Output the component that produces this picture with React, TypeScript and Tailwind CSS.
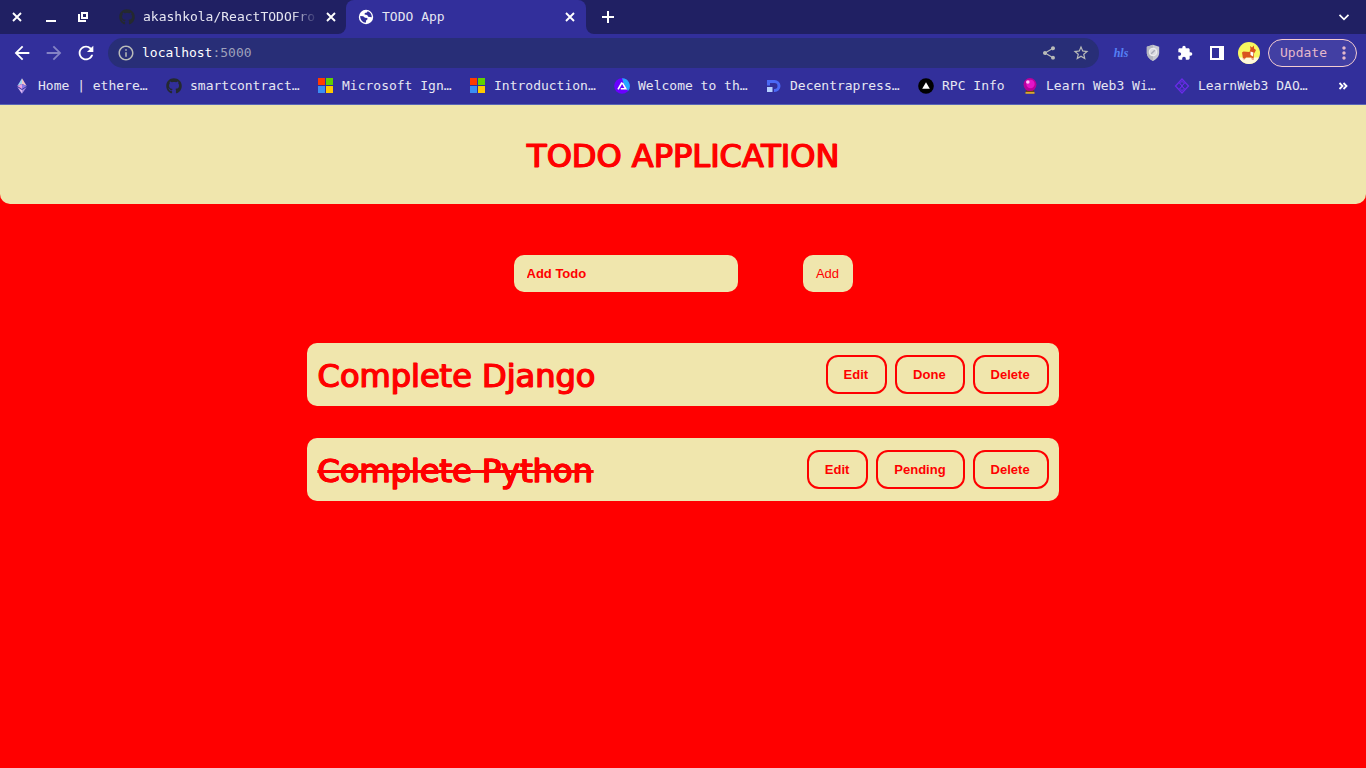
import React, { useState } from 'react';
import {
  MdArrowBack,
  MdArrowForward,
  MdRefresh,
  MdInfoOutline,
  MdShare,
  MdStarBorder,
  MdExtension,
  MdMoreVert,
} from 'react-icons/md';
import { FaGithub } from 'react-icons/fa';

type IconProps = { className?: string };

function CloseIcon({ className }: IconProps) {
  return (
    <svg viewBox="0 0 10 10" className={className} fill="none" stroke="currentColor" strokeWidth="1.900" aria-hidden="true">
      <path d="M1 1l8 8M9 1l-8 8" />
    </svg>
  );
}

function GlobeIcon() {
  return (
    <svg viewBox="0 0 16 16" className="size-4 shrink-0" aria-hidden="true">
      <circle cx="8" cy="8" r="7.2" fill="#fff" />
      <path
        d="M2.200 7l3 .2 1.800 1.500 2.400.3v1.400l-1.200.8-.4 2.600C4.600 13.600 2.200 11 2.200 7zM9.600 2.200L9 3.600 6.800 4 6.600 5.400l2.600.6 1 1.800 3.600.4C13.800 5 12 2.800 9.600 2.200z"
        fill="#322f9b"
      />
    </svg>
  );
}

function EthereumIcon() {
  return (
    <svg viewBox="0 0 16 16" className="size-4 shrink-0" aria-hidden="true">
      <path d="M8 .3L3.300 8 8 6z" fill="#9fd4f2" />
      <path d="M8 .3L12.700 8 8 6z" fill="#f2c3c9" />
      <path d="M3.300 8L8 6v4.900z" fill="#e9a0e0" />
      <path d="M12.700 8L8 6v4.900z" fill="#8a7be8" />
      <path d="M3.300 9L8 11.900v3.900z" fill="#d9b6f2" />
      <path d="M12.700 9L8 11.900v3.900z" fill="#a58ce0" />
    </svg>
  );
}

function MicrosoftIcon() {
  return (
    <svg viewBox="0 0 16 16" className="size-4 shrink-0" aria-hidden="true">
      <path d="M0 0h7v7H0z" fill="#ff3a00" />
      <path d="M8 0h7v7H8z" fill="#60d000" />
      <path d="M0 8h7v7H0z" fill="#3a8df5" />
      <path d="M8 8h7v7H8z" fill="#ffc800" />
    </svg>
  );
}

function AlchemyIcon() {
  return (
    <svg viewBox="0 0 16 16" className="size-4 shrink-0" aria-hidden="true">
      <circle cx="8" cy="8" r="7.800" fill="#6a00ff" />
      <path d="M8 .2A7.800 7.800 0 0 1 14 13L9.500 5z" fill="#22a7ff" />
      <path d="M8.400 4.800L11.800 10.800H6.800" fill="none" stroke="#fff" strokeWidth="1.600" />
      <path d="M8 4.500L4 11.400" stroke="#fff" strokeWidth="1.600" />
    </svg>
  );
}

function DecentraIcon() {
  return (
    <svg viewBox="0 0 16 16" className="size-4 shrink-0" aria-hidden="true">
      <path d="M1 3.500h7.500a4.500 4.500 0 0 1 0 9H8" fill="none" stroke="#4a68f5" strokeWidth="3" />
      <path d="M1 2h3v5.500H1z" fill="#4a68f5" />
      <path d="M1 9h5.500v5H1z" fill="#b5d0ff" />
    </svg>
  );
}

function TriangleIcon() {
  return (
    <svg viewBox="0 0 16 16" className="size-4 shrink-0" aria-hidden="true">
      <circle cx="8" cy="8" r="7.800" fill="#000" />
      <path d="M8 4.200l3.800 6.600H4.200z" fill="#fff" />
    </svg>
  );
}

function CrystalIcon() {
  return (
    <svg viewBox="0 0 16 16" className="size-4 shrink-0" aria-hidden="true">
      <path d="M4.500 11h7l1 4h-9z" fill="#6e4312" />
      <path d="M3.500 14h9v1.800h-9z" fill="#d8a62c" />
      <circle cx="8" cy="6.600" r="6.500" fill="#b8009c" />
      <circle cx="8.500" cy="6" r="4.200" fill="#e414c8" />
      <circle cx="5.800" cy="4" r="1.800" fill="#ffc2f7" />
    </svg>
  );
}

function DaoIcon() {
  return (
    <svg viewBox="0 0 16 16" className="size-4 shrink-0" fill="none" stroke="#6a2be8" aria-hidden="true">
      <path d="M8 1l6.500 7L8 15 1.500 8z" strokeWidth="1.300" />
      <path d="M5 4.500L8 8l3 3.500M11 4.500L5 11.500" strokeWidth="1" />
      <path d="M8 3.200l2 2.300-2 2.300-2-2.300zM8 8.200l2 2.300-2 2.300-2-2.300z" strokeWidth="1" />
    </svg>
  );
}

function ShieldIcon() {
  return (
    <svg viewBox="0 0 16 18" className="h-[18px] w-4" aria-hidden="true">
      <path d="M8 .8l6.200 2v5.700c0 4-2.700 6.800-6.200 8.500-3.500-1.700-6.200-4.500-6.200-8.500V2.800z" fill="#c9cad2" />
      <path d="M8 .8v16.200C4.500 15.300 1.800 12.500 1.800 8.500V2.800z" fill="#b4b6c0" />
      <circle cx="8" cy="8" r="3.800" fill="#dcdce2" stroke="#f2f2f2" />
      <path d="M6.200 9.800l3.600-3.600" stroke="#a6a8b6" strokeWidth="1.400" />
    </svg>
  );
}

function CorgiAvatar() {
  return (
    <svg viewBox="0 0 22 22" className="size-[22px]" aria-hidden="true">
      <circle cx="11" cy="11" r="11" fill="#f7f760" />
      <path d="M1 15.500h20a11 11 0 0 1-20 0z" fill="#fff9dc" />
      <path d="M4 10.500l1.500-1 6 .5 1-3L12 4l2 1.500 2-2v3l2 1.500-1 2-1 1.500-.5 6.500H14l-.5-2.500H8L6.500 17.500H5l-.5-4z" fill="#d9531e" />
      <path d="M12.500 9.500l3 1-.5 4-2.500-1.500zM5 16.500h1.500v1H5zM14 16.500h1.500v1H14z" fill="#fff" />
    </svg>
  );
}

const bookmarks = [
  { label: 'Home | ethere…', icon: <EthereumIcon />, width: 'w-28' },
  { label: 'smartcontract…', icon: <FaGithub className="size-4 shrink-0 text-[#24292f]" />, width: 'w-28' },
  { label: 'Microsoft Ign…', icon: <MicrosoftIcon />, width: 'w-28' },
  { label: 'Introduction…', icon: <MicrosoftIcon />, width: 'w-26' },
  { label: 'Welcome to th…', icon: <AlchemyIcon />, width: 'w-28' },
  { label: 'Decentrapress…', icon: <DecentraIcon />, width: 'w-28' },
  { label: 'RPC Info', icon: <TriangleIcon />, width: 'w-16' },
  { label: 'Learn Web3 Wi…', icon: <CrystalIcon />, width: 'w-28' },
  { label: 'LearnWeb3 DAO…', icon: <DaoIcon />, width: 'w-28' },
];

function TabStrip() {
  return (
    <div className="flex h-[34px] items-stretch bg-[#202063] text-white">
      <div className="flex w-[106px] shrink-0 items-center gap-4 pl-[9px]">
        <button aria-label="Close window" className="grid size-4 place-items-center">
          <CloseIcon className="size-[10px]" />
        </button>
        <button aria-label="Minimize window" className="ml-[2px] grid size-4 place-items-center">
          <svg viewBox="0 0 16 16" className="size-4" aria-hidden="true">
            <path d="M3 11h10v2H3z" fill="currentColor" />
          </svg>
        </button>
        <button aria-label="Restore window" className="grid size-4 place-items-center">
          <svg viewBox="0 0 16 16" className="size-4" fill="none" stroke="currentColor" strokeWidth="2" aria-hidden="true">
            <path d="M7 4h5v5H7zM4 5v7h7" />
          </svg>
        </button>
      </div>
      <div className="flex w-60 shrink-0 bg-[#322f9b]">
        <div className="flex w-full items-center rounded-br-lg bg-[#202063] pr-[10px] pl-[13px]">
          <FaGithub className="size-4 shrink-0 text-[#24292f]" />
          <span className="ml-2 flex-1 whitespace-nowrap text-[#e6e6f2] mask-r-from-85% mask-r-to-100%">
            akashkola/ReactTODOFro
          </span>
          <button aria-label="Close akashkola tab" className="ml-2 grid size-[10px] place-items-center">
            <CloseIcon className="size-[10px]" />
          </button>
        </div>
      </div>
      <div className="flex w-60 shrink-0 items-center rounded-t-lg bg-[#322f9b] pr-[11px] pl-3">
        <GlobeIcon />
        <span className="ml-2 flex-1 text-[#e6e6f2]">TODO App</span>
        <button aria-label="Close TODO App tab" className="grid size-[10px] place-items-center">
          <CloseIcon className="size-[10px]" />
        </button>
      </div>
      <div className="flex flex-1 bg-[#322f9b]">
        <div className="flex flex-1 items-center justify-between rounded-bl-lg bg-[#202063] pr-4 pl-[15px]">
          <button aria-label="New tab" className="grid size-[14px] place-items-center">
            <svg viewBox="0 0 14 14" className="size-[14px]" stroke="currentColor" strokeWidth="2" aria-hidden="true">
              <path d="M7 1v12M1 7h12" />
            </svg>
          </button>
          <button aria-label="Search tabs" className="grid size-3 place-items-center">
            <svg viewBox="0 0 12 12" className="size-3" fill="none" stroke="currentColor" strokeWidth="1.700" aria-hidden="true">
              <path d="M1.500 3.800L6 8.300l4.500-4.500" />
            </svg>
          </button>
        </div>
      </div>
    </div>
  );
}

function Toolbar() {
  const [url, setUrl] = useState('localhost:5000');
  const [host, port] = url.split(':');
  return (
    <div className="flex h-[38px] items-center bg-[#322f9b] pr-[9px] pl-[11px] text-white">
      <div className="flex w-[97px] shrink-0 items-center gap-[10px]">
        <button aria-label="Back"><MdArrowBack className="size-[22px]" /></button>
        <button aria-label="Forward" className="text-[#8583c5]"><MdArrowForward className="size-[22px]" /></button>
        <button aria-label="Reload"><MdRefresh className="size-[22px]" /></button>
      </div>
      <div className="flex h-[30px] flex-1 items-center rounded-full bg-[#282e77] pr-[9px] pl-[9px]">
        <MdInfoOutline className="size-[18px] text-[#b9bbb8]" />
        <div className="relative ml-[7px] flex-1">
          <span aria-hidden="true">
            {host}
            {port !== undefined && <span className="text-[#9fa1bb]">:{port}</span>}
          </span>
          <input
            aria-label="Address"
            value={url}
            onChange={(e) => setUrl(e.target.value)}
            className="absolute inset-0 w-full bg-transparent text-transparent caret-white outline-none"
          />
        </div>
        <button aria-label="Share" className="mr-[15px] text-[#b9bbb8]"><MdShare className="size-4" /></button>
        <button aria-label="Bookmark this page" className="text-[#b9bbb8]"><MdStarBorder className="size-[18px]" /></button>
      </div>
      <div className="flex items-center pr-[3px] pl-[6px]">
        <button aria-label="HLS extension" className="w-8 font-['Liberation_Serif',serif] text-[12px] leading-4 font-bold text-[#5580f5] italic">hls</button>
        <button aria-label="Shield extension" className="grid w-8 place-items-center"><ShieldIcon /></button>
        <button aria-label="Extensions" className="grid w-8 place-items-center"><MdExtension className="size-4" /></button>
        <button aria-label="Side panel" className="grid w-8 place-items-center">
          <svg viewBox="0 0 14 14" className="size-[14px]" aria-hidden="true">
            <path d="M0 0h14v14H0zM2 2v10h7V2z" fill="currentColor" fillRule="evenodd" />
          </svg>
        </button>
        <button aria-label="Profile" className="grid w-8 place-items-center"><CorgiAvatar /></button>
      </div>
      <button className="flex h-7 w-[89px] shrink-0 items-center justify-between rounded-full border border-[#f4cdd0] bg-[#423fa3] pr-[2px] pl-[11px] text-[#e4b9cb]">
        <span>Update</span>
        <MdMoreVert className="size-5" />
      </button>
    </div>
  );
}

function BookmarksBar() {
  return (
    <nav aria-label="Bookmarks" className="flex h-[33px] items-center gap-4 border-b border-[#5a66b5] bg-[#322f9b] pr-[18px] pb-1 pl-[14px] text-[#e6e6f2]">
      {bookmarks.map((b) => (
        <a key={b.label} href="#" className="flex shrink-0 items-center gap-2">
          {b.icon}
          <span className={`${b.width} whitespace-nowrap`}>{b.label}</span>
        </a>
      ))}
      <button aria-label="More bookmarks" className="ml-auto text-white">
        <svg viewBox="0 0 10 8" className="h-2 w-[10px]" fill="none" stroke="currentColor" strokeWidth="1.800" aria-hidden="true">
          <path d="M1.500 1l3 3-3 3M5.500 1l3 3-3 3" />
        </svg>
      </button>
    </nav>
  );
}

type Todo = { id: number; title: string; done: boolean };

const titleText =
  "pt-1 font-['DejaVu_Sans',sans-serif] text-[32px] leading-[37px] font-normal [-webkit-text-stroke:1px_red] [text-shadow:1px_0_0_red]";
const actionButton = 'h-[39px] rounded-[12px] border-2 border-[#ff0000] pr-[17px] pl-4 font-bold';

export default function App() {
  const [todos, setTodos] = useState<Todo[]>([
    { id: 1, title: 'Complete Django', done: false },
    { id: 2, title: 'Complete Python', done: true },
  ]);
  const [draft, setDraft] = useState('');

  const addTodo = (e: React.FormEvent) => {
    e.preventDefault();
    if (!draft.trim()) return;
    setTodos([...todos, { id: Date.now(), title: draft, done: false }]);
    setDraft('');
  };
  const toggle = (id: number) => setTodos(todos.map((t) => (t.id === id ? { ...t, done: !t.done } : t)));
  const remove = (id: number) => setTodos(todos.filter((t) => t.id !== id));

  return (
    <div className="flex min-h-screen flex-col bg-[#ff0000]">
      <div className="font-['DejaVu_Sans_Mono',monospace] text-[13px] leading-5">
        <TabStrip />
        <Toolbar />
        <BookmarksBar />
      </div>
      <div className="font-['Liberation_Sans',sans-serif] text-[13px] text-[#ff0000]">
        <header className="rounded-b-[10px] bg-[#f0e6ad] px-4 py-[29px] text-center">
          <h1 className={titleText}>TODO APPLICATION</h1>
        </header>
        <main>
          <form onSubmit={addTodo} className="mt-[51px] flex justify-center gap-[65px]">
            <input
              aria-label="Add Todo"
              placeholder="Add Todo"
              value={draft}
              onChange={(e) => setDraft(e.target.value)}
              className="h-[37px] w-56 rounded-[10px] bg-[#f0e6ad] px-[13px] font-bold outline-none placeholder:text-[#ff0000]"
            />
            <button className="h-[37px] w-[50px] rounded-[10px] bg-[#f0e6ad]">Add</button>
          </form>
          <ul className="mx-auto mt-[51px] flex w-[55%] flex-col gap-8">
            {todos.map((t) => (
              <li key={t.id} className="flex h-[63px] items-center justify-between rounded-[10px] bg-[#f0e6ad] px-[10px]">
                <h2 className={t.done ? `${titleText} line-through` : titleText}>{t.title}</h2>
                <div className="flex gap-2">
                  <button className={actionButton}>Edit</button>
                  <button className={actionButton} onClick={() => toggle(t.id)}>{t.done ? 'Pending' : 'Done'}</button>
                  <button className={actionButton} onClick={() => remove(t.id)}>Delete</button>
                </div>
              </li>
            ))}
          </ul>
        </main>
      </div>
    </div>
  );
}
